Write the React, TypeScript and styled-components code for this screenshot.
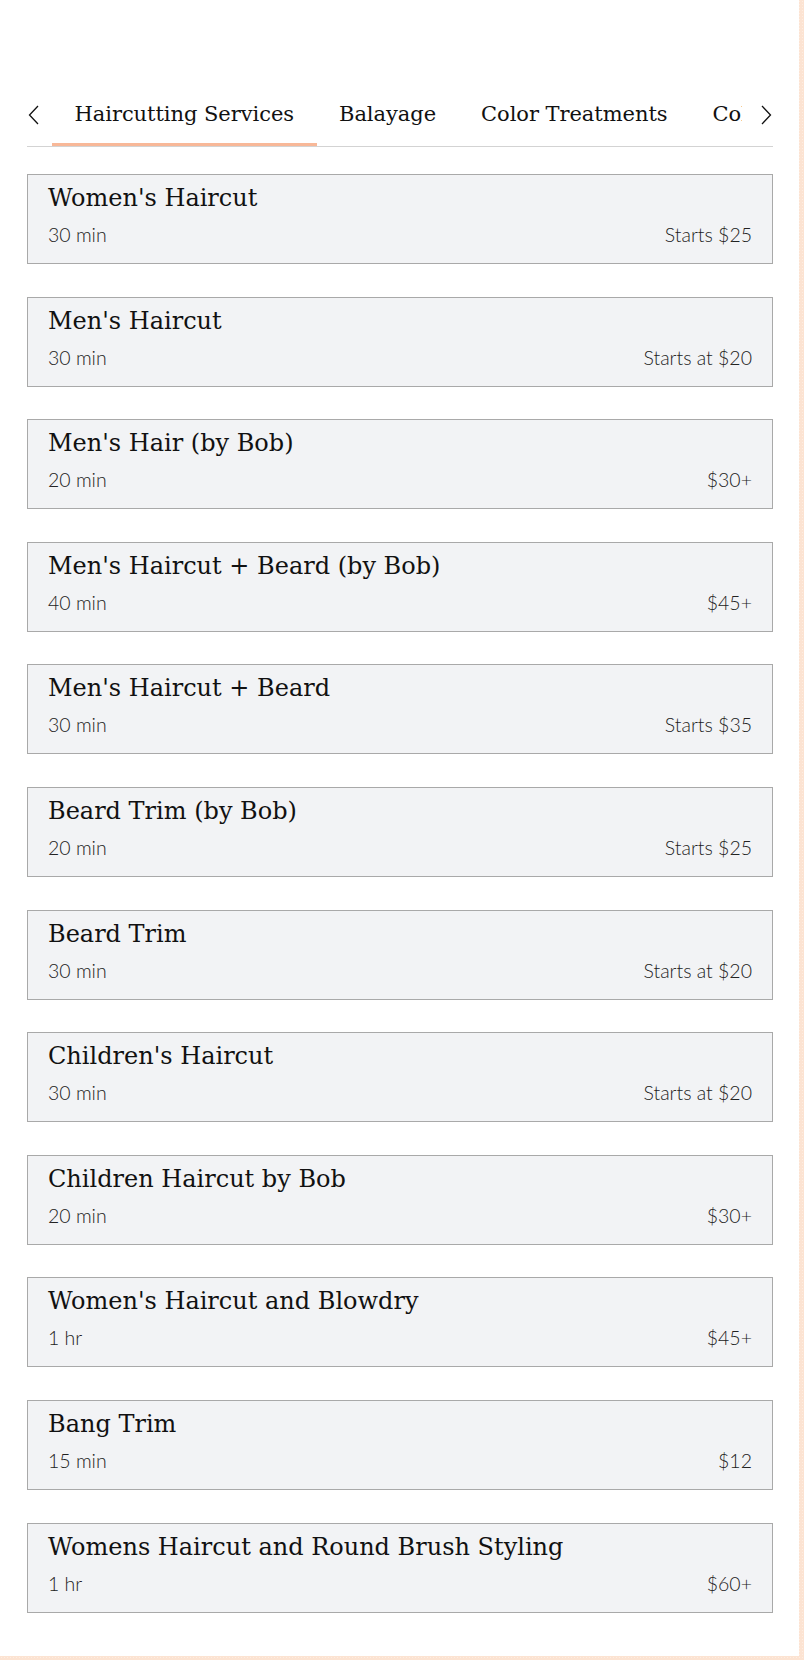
import React from "react";
import styled, { createGlobalStyle } from "styled-components";

const GlobalStyle = createGlobalStyle`
  * { box-sizing: border-box; }
  html, body { margin: 0; padding: 0; }
  body {
    background-color: #fce3d2;
    background-image: radial-gradient(rgba(255,255,255,0.35) 0.6px, transparent 0.8px);
    background-size: 3px 3px;
  }
`;

const Page = styled.div`
  width: 799px;
  height: 1656px;
  background: #ffffff;
  padding: 100px 26px 0 27px;
  overflow: hidden;
`;

const TabBar = styled.div`
  display: flex;
  align-items: stretch;
  height: 47px;
  border-bottom: 1px solid #d3d3d3;
`;

const ArrowButton = styled.button<{ $side: "left" | "right" }>`
  flex: none;
  width: ${(p) => (p.$side === "left" ? "25px" : "31px")};
  display: flex;
  justify-content: ${(p) => (p.$side === "left" ? "flex-start" : "flex-end")};
  align-items: flex-start;
  padding: 5px ${(p) => (p.$side === "left" ? "0 0 1px" : "1px 0 0")};
  background: none;
  border: none;
  cursor: pointer;
  color: #111;
`;

const TabViewport = styled.div`
  flex: 1;
  overflow: hidden;
  display: flex;
  padding-right: 10px;
`;

const Tab = styled.div<{ $active?: boolean }>`
  flex: none;
  padding: 0 22.5px;
  height: 46px;
  font-family: "DejaVu Serif", "Liberation Serif", serif;
  font-size: 21px;
  line-height: 28px;
  color: #111;
  white-space: nowrap;
  border-bottom: 3px solid ${(p) => (p.$active ? "#f8b898" : "transparent")};
  letter-spacing: -0.05px;
`;

const List = styled.div`
  display: flex;
  flex-direction: column;
  gap: 32.6px;
  margin-top: 27px;
`;

const Card = styled.div`
  height: 90px;
  background: #f2f3f5;
  border: 1px solid #a9a9a9;
  padding: 7px 20px 0 20px;
`;

const Title = styled.div`
  font-family: "DejaVu Serif", "Liberation Serif", serif;
  font-size: 24px;
  line-height: 32px;
  color: #111;
  white-space: nowrap;
`;

const Meta = styled.div`
  display: flex;
  justify-content: space-between;
  margin-top: 9px;
  font-family: Lato, "Open Sans", sans-serif;
  font-weight: 300;
  font-size: 19.5px;
  line-height: 24px;
  color: #222;
`;

const Chevron = ({ dir }: { dir: "left" | "right" }) => (
  <svg width="12" height="20" viewBox="0 0 12 20" fill="none">
    <polyline
      points={dir === "left" ? "10,1 1.5,10 10,19" : "2,1 10.5,10 2,19"}
      stroke="#111"
      strokeWidth="1.3"
      strokeLinejoin="miter"
    />
  </svg>
);

const tabs = ["Haircutting Services", "Balayage", "Color Treatments", "Color Corrections"];

const services = [
  { name: "Women's Haircut", time: "30 min", price: "Starts $25" },
  { name: "Men's Haircut", time: "30 min", price: "Starts at $20" },
  { name: "Men's Hair (by Bob)", time: "20 min", price: "$30+" },
  { name: "Men's Haircut + Beard (by Bob)", time: "40 min", price: "$45+" },
  { name: "Men's Haircut + Beard", time: "30 min", price: "Starts $35" },
  { name: "Beard Trim (by Bob)", time: "20 min", price: "Starts $25" },
  { name: "Beard Trim", time: "30 min", price: "Starts at $20" },
  { name: "Children's Haircut", time: "30 min", price: "Starts at $20" },
  { name: "Children Haircut by Bob", time: "20 min", price: "$30+" },
  { name: "Women's Haircut and Blowdry", time: "1 hr", price: "$45+" },
  { name: "Bang Trim", time: "15 min", price: "$12" },
  { name: "Womens Haircut and Round Brush Styling", time: "1 hr", price: "$60+" },
];

export default function App() {
  return (
    <>
      <GlobalStyle />
      <Page>
        <TabBar>
          <ArrowButton $side="left" aria-label="Previous">
            <Chevron dir="left" />
          </ArrowButton>
          <TabViewport>
            {tabs.map((t, i) => (
              <Tab key={t} $active={i === 0}>
                {t}
              </Tab>
            ))}
          </TabViewport>
          <ArrowButton $side="right" aria-label="Next">
            <Chevron dir="right" />
          </ArrowButton>
        </TabBar>
        <List>
          {services.map((s) => (
            <Card key={s.name}>
              <Title>{s.name}</Title>
              <Meta>
                <span>{s.time}</span>
                <span>{s.price}</span>
              </Meta>
            </Card>
          ))}
        </List>
      </Page>
    </>
  );
}
